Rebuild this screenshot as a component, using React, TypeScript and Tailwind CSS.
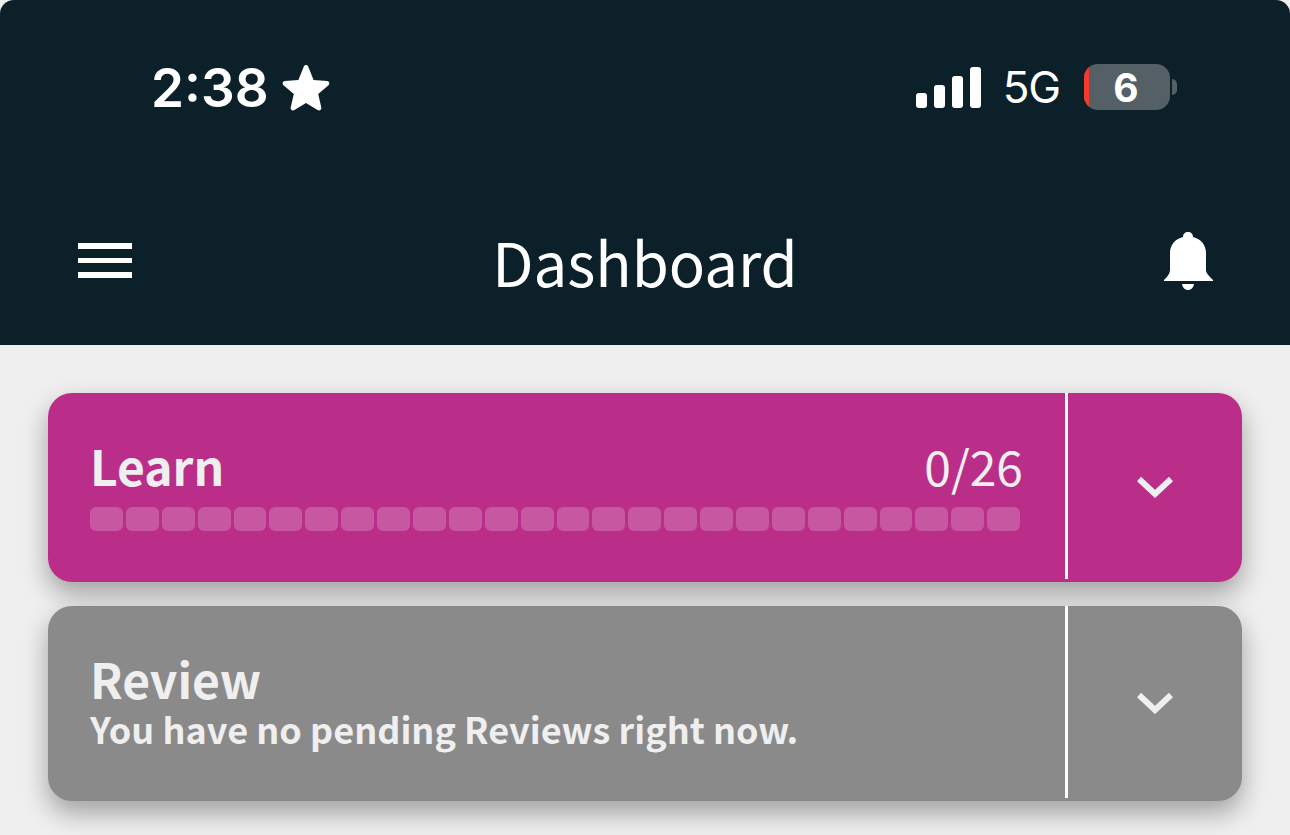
import { ReactNode } from 'react';

const cjk = 'font-["Noto_Sans_CJK_JP","Noto_Sans",sans-serif]';

const segments = Array.from({ length: 26 }, (_, i) => i);

function StatusBar() {
  return (
    <div className='flex h-[176px] items-start justify-between pl-[151px] pr-[113px] pt-[57px] font-["Inter","Liberation_Sans",sans-serif] text-white'>
      <div className="flex items-center gap-[12px]">
        <span className="text-[53px] font-semibold leading-[62px]">2:38</span>
        <svg width="50" height="48" viewBox="0 0 50 48" className="-mt-[1px]">
          <path
            d="M25 1c1 0 1.800.6 2.300 1.700l5.300 13.200 13.500 1.100c2.200.2 3 2.800 1.400 4.200l-10.300 8.900 3.100 13.300c.5 2.100-1.800 3.800-3.700 2.700L25 38.900 13.400 46.100c-1.900 1.100-4.200-.6-3.700-2.700l3.100-13.300L2.500 21.200c-1.600-1.400-.8-4 1.400-4.200l13.500-1.100 5.300-13.200C23.200 1.600 24 1 25 1z"
            fill="currentColor"
          />
        </svg>
      </div>
      <div className="flex items-center pt-[7px]">
        <div className="flex items-end gap-[7px]">
          <span className="h-[15px] w-[11px] rounded-[3px] bg-white" />
          <span className="h-[23px] w-[11px] rounded-[3px] bg-white" />
          <span className="h-[32px] w-[11px] rounded-[3px] bg-white" />
          <span className="h-[41px] w-[11px] rounded-[3px] bg-white" />
        </div>
        <span className="ml-[22px] text-[44px] font-normal leading-[46px] tracking-[-1.2px]">5G</span>
        <div className="relative ml-[24px] flex h-[46px] w-[86px] items-center justify-center overflow-hidden rounded-[14px] bg-[#545f66]">
          <span className="absolute bottom-0 left-0 top-0 w-[5px] bg-[#f7392c]" />
          <span className="-ml-[2px] text-[39px] font-bold leading-none">6</span>
        </div>
        <span className="ml-[2px] h-[16px] w-[5px] rounded-r-[5px] bg-[#545f66]" />
      </div>
    </div>
  );
}

function Chevron({ className }: { className: string }) {
  return (
    <svg width="36" height="22" viewBox="0 0 36 22" className={className}>
      <path d="M2 3l16 15L34 3" fill="none" stroke="currentColor" strokeWidth="6" />
    </svg>
  );
}

function Card({ bg, height, children }: { bg: string; height: string; children: ReactNode }) {
  return (
    <div className={`flex ${height} ${bg} overflow-hidden rounded-[24px] shadow-[0_12px_26px_rgba(0,0,0,0.33)]`}>
      <div className="w-[1017px] shrink-0 pl-[42px] pr-[45px]">{children}</div>
      <div className="mb-[3px] w-[3px] shrink-0 bg-white" />
      <div className="flex flex-1 items-center justify-center pb-[2px] text-[#efefef]">
        <Chevron className="block" />
      </div>
    </div>
  );
}

export default function App() {
  return (
    <div className={`flex h-[835px] w-full flex-col overflow-hidden bg-[#efefef] ${cjk}`}>
      <header className="h-[345px] shrink-0 rounded-t-[14px] bg-[#0c2029] text-white">
        <StatusBar />
        <div className="flex h-[169px] items-start justify-between pl-[78px] pr-[77px]">
          <div className="mt-[67px] flex w-[54px] flex-col gap-[9px]">
            <span className="h-[6px] bg-white" />
            <span className="h-[5px] bg-white" />
            <span className="h-[6px] bg-white" />
          </div>
          <h1 className="-ml-[5px] mt-[42px] text-[60px] font-normal leading-[86px]">Dashboard</h1>
          <svg width="50" height="60" viewBox="0 0 50 60" className="mt-[55px]">
            <path
              d="M25 1c3 0 5 2 5 5 8 2 13 8 13 16v17c0 3 3 6 7 10v1H1v-1c4-4 6-7 6-10V22C7 14 12 8 20 6c0-3 2-5 5-5z"
              fill="currentColor"
            />
            <path d="M19 53h12c-.6 3.700-3 6-6 6s-5.400-2.300-6-6z" fill="currentColor" />
          </svg>
        </div>
      </header>

      <main className="flex flex-col gap-[24px] px-[48px] pt-[48px]">
        <Card bg="bg-[#ba2e89]" height="h-[189px]">
          <div className="flex items-start justify-between pt-[37px] text-[#efefef]">
            <span className="text-[48px] font-bold leading-[70px]">Learn</span>
            <span className="-mr-[3px] text-[48px] font-normal leading-[70px]">0/26</span>
          </div>
          <div className="mt-[7px] flex h-[24px] gap-[3px]">
            {segments.map((i) => (
              <span key={i} className="flex-1 rounded-[6px] bg-white/20" />
            ))}
          </div>
        </Card>
        <Card bg="bg-[#8a8a8a]" height="h-[195px]">
          <div className="pt-[44px] text-[#efefef]">
            <div className="text-[48px] font-bold leading-[56px]">Review</div>
            <div className="whitespace-nowrap text-[36px] font-bold leading-[44px]">
              You have no pending Reviews right now.
            </div>
          </div>
        </Card>
      </main>
    </div>
  );
}
